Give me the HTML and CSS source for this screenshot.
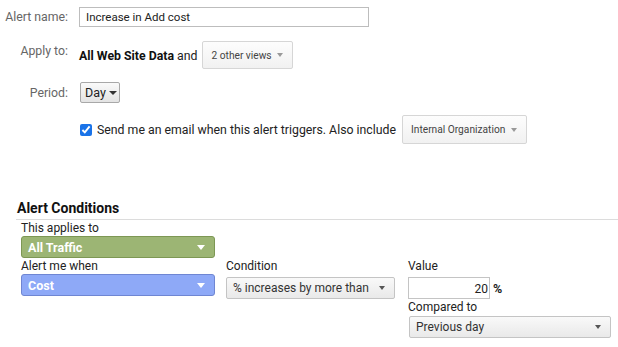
FILE: index.html
```html
<!DOCTYPE html>
<html>
<head>
<meta charset="utf-8">
<link rel="stylesheet" href="styles.css">
</head>
<body>
<div class="settings">
  <div class="row row-name">
    <div class="label">Alert name:</div>
    <div class="text-input name-input">Increase in Add cost</div>
  </div>
  <div class="row row-apply">
    <div class="label label-top">Apply to:</div>
    <div class="apply-text"><b>All Web Site Data</b> and</div>
    <div class="light-select views-select">2 other views<span class="caret caret-gray"></span></div>
  </div>
  <div class="row row-period">
    <div class="label">Period:</div>
    <div class="day-button">Day<span class="caret caret-dark"></span></div>
  </div>
  <div class="row row-email">
    <div class="label"></div>
    <input type="checkbox" class="check" checked>
    <div class="email-text">Send me an email when this alert triggers. Also include</div>
    <div class="light-select org-select">Internal Organization<span class="caret caret-gray"></span></div>
  </div>
</div>

<div class="conditions">
  <div class="section-title">Alert Conditions</div>
  <div class="applies">
    <div class="field-label">This applies to</div>
    <div class="color-select green">All Traffic<span class="caret caret-white"></span></div>
  </div>
  <div class="cond-row">
    <div class="col col-metric">
      <div class="field-label">Alert me when</div>
      <div class="color-select blue">Cost<span class="caret caret-white"></span></div>
    </div>
    <div class="col col-condition">
      <div class="field-label">Condition</div>
      <div class="gray-select cond-select">% increases by more than<span class="caret caret-dark-sm"></span></div>
    </div>
    <div class="col col-value">
      <div class="field-label">Value</div>
      <div class="value-line">
        <div class="value-input">20</div>
        <span class="percent">%</span>
      </div>
      <div class="field-label compared-label">Compared to</div>
      <div class="gray-select compare-select">Previous day<span class="caret caret-dark-sm"></span></div>
    </div>
  </div>
</div>
</body>
</html>
```

FILE: styles.css
```css
html, body {
  margin: 0;
  padding: 0;
  background: #ffffff;
}

body {
  width: 618px;
  height: 347px;
  overflow: hidden;
  font-family: Roboto, "Liberation Sans", Arial, sans-serif;
  font-size: 12.3px;
  color: #222;
}

.settings {
  padding-top: 7px;
}

.row {
  display: flex;
  align-items: center;
}

.label {
  width: 68px;
  flex: none;
  text-align: right;
  color: #666;
  font-size: 12.3px;
  margin-right: 11px;
}

.label-top {
  align-self: flex-start;
  margin-top: 3px;
}

.text-input {
  box-sizing: border-box;
  height: 20px;
  border: 1px solid #bdbdbd;
  background: #fff;
  padding: 0 6px;
  line-height: 18px;
  font-size: 11.5px;
  color: #222;
}

.name-input {
  width: 290px;
}

.row-apply {
  margin-top: 14px;
}

.apply-text {
  font-size: 12.3px;
  color: #222;
  margin-right: 5px;
  padding-top: 1px;
}

.apply-text b {
  color: #111;
  font-weight: 700;
}

.light-select {
  box-sizing: border-box;
  display: flex;
  align-items: center;
  justify-content: space-between;
  height: 28px;
  border: 1px solid #d6d6d6;
  border-radius: 2px;
  background: linear-gradient(#fdfdfd, #f1f1f1);
  color: #444;
  font-size: 10.2px;
  padding: 0 9px 0 8px;
}

.views-select {
  width: 91px;
}

.row-period {
  margin-top: 13px;
}

.day-button {
  box-sizing: border-box;
  display: flex;
  align-items: center;
  height: 21px;
  width: 40px;
  padding: 0 0 0 4px;
  border: 1px solid #a8a8a8;
  border-radius: 2px;
  background: linear-gradient(#fafafa, #e3e3e3);
  font-size: 12.5px;
  color: #222;
  margin-left: 1px;
}

.row-email {
  margin-top: 12px;
}

.check {
  margin: 0 5px 0 1px;
  width: 12px;
  height: 12px;
  accent-color: #1a73e8;
}

.email-text {
  font-size: 12.3px;
  color: #222;
  margin-right: 6px;
}

.org-select {
  width: 125px;
  height: 29px;
}

.caret {
  display: inline-block;
  width: 0;
  height: 0;
  border-left: 3.5px solid transparent;
  border-right: 3.5px solid transparent;
  border-top: 4px solid #888;
}

.caret-gray {
  border-top-color: #999;
}

.caret-dark {
  margin-left: 3px;
  border-top-color: #333;
  border-left-width: 4px;
  border-right-width: 4px;
}

.caret-white {
  border-top-color: #fff;
  border-left-width: 4px;
  border-right-width: 4px;
  border-top-width: 5px;
}

.caret-dark-sm {
  border-top-color: #555;
}

.conditions {
  margin-top: 56px;
}

.section-title {
  font-weight: 700;
  font-size: 14px;
  color: #111;
  line-height: 17px;
  padding-bottom: 2px;
  margin-left: 16px;
  padding-left: 1px;
  border-bottom: 1px solid #dcdcdc;
}

.applies {
  padding-left: 21px;
}

.field-label {
  font-size: 12px;
  color: #222;
  line-height: 16px;
}

.color-select {
  box-sizing: border-box;
  display: flex;
  align-items: center;
  justify-content: space-between;
  width: 194px;
  height: 22px;
  border-radius: 3px;
  padding: 0 9px 0 6px;
  font-weight: 700;
  font-size: 12.5px;
  color: #fff;
}

.green {
  background: #9cb574;
  border: 1px solid #7d9754;
}

.blue {
  background: #8ea9f7;
  border: 1px solid #6f86d2;
}

.cond-row {
  display: flex;
  padding-left: 21px;
}

.col-metric {
  width: 194px;
  margin-right: 11px;
}

.col-condition {
  width: 169px;
  margin-right: 13px;
}

.gray-select {
  box-sizing: border-box;
  display: flex;
  align-items: center;
  justify-content: space-between;
  height: 22px;
  margin-top: 3px;
  border: 1px solid #c4c4c4;
  border-radius: 2px;
  background: linear-gradient(#f9f9f9, #e9e9e9);
  padding: 0 9px 0 6px;
  font-size: 12px;
  color: #333;
}

.cond-select {
  width: 169px;
}

.value-line {
  display: flex;
  align-items: center;
  margin-top: 3px;
}

.value-input {
  box-sizing: border-box;
  width: 82px;
  height: 22px;
  border: 1px solid #c4c4c4;
  text-align: right;
  padding-right: 1px;
  line-height: 22px;
  font-size: 12px;
  color: #222;
}

.percent {
  font-weight: 700;
  font-size: 12.5px;
  margin-left: 3px;
  color: #222;
}

.compared-label {
  margin-top: 0;
}

.compare-select {
  width: 202px;
  margin-top: 1px;
  margin-left: 1px;
}
```
